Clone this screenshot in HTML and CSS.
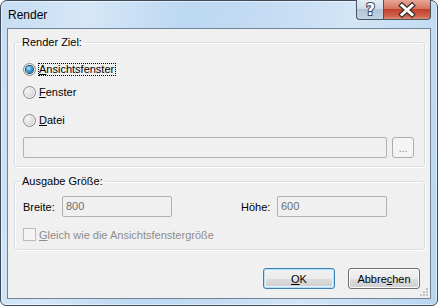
FILE: index.html
```html
<!DOCTYPE html>
<html lang="de">
<head>
    <meta charset="UTF-8">
    <meta name="viewport" content="width=device-width, initial-scale=1.0">
    <title>Render</title>
    <link rel="stylesheet" href="styles.css">
</head>
<body>
    <div class="window">
        <div class="titlebar">
            <span class="title">Render</span>
            <div class="caption-buttons">
                <div class="cap-btn cap-help">
                    <svg width="25" height="18" viewBox="0 0 25 18">
                        <text x="12.5" y="14" text-anchor="middle" class="cap-glyph">?</text>
                    </svg>
                </div>
                <div class="cap-btn cap-close">
                    <svg width="46" height="18" viewBox="0 0 46 18">
                        <path d="M18 4.5 L28 13.5 M28 4.5 L18 13.5" stroke="#3a3230" stroke-width="5.4" stroke-linecap="square"/>
                        <path d="M18 4.5 L28 13.5 M28 4.5 L18 13.5" stroke="#fff" stroke-width="3" stroke-linecap="square"/>
                    </svg>
                </div>
            </div>
        </div>

        <div class="client">
            <fieldset class="group group-target">
                <legend>Render Ziel:</legend>
                <label class="radio row-first">
                    <span class="radio-box checked"></span>
                    <span class="radio-text focus"><u>A</u>nsichtsfenster</span>
                </label>
                <label class="radio row-second">
                    <span class="radio-box"></span>
                    <span class="radio-text"><u>F</u>enster</span>
                </label>
                <label class="radio row-third">
                    <span class="radio-box"></span>
                    <span class="radio-text"><u>D</u>atei</span>
                </label>
                <div class="file-row">
                    <div class="field field-file"></div>
                    <div class="btn-browse">...</div>
                </div>
            </fieldset>

            <fieldset class="group group-size">
                <legend>Ausgabe Größe:</legend>
                <div class="size-row">
                    <span class="size-label">Breite:</span>
                    <div class="field">800</div>
                    <span></span>
                    <span class="size-label">Höhe:</span>
                    <div class="field">600</div>
                </div>
                <label class="check-row">
                    <span class="check-box"></span>
                    <span class="check-text"><u>G</u>leich wie die Ansichtsfenstergröße</span>
                </label>
            </fieldset>

            <div class="footer">
                <div class="btn btn-default"><span><u>O</u>K</span></div>
                <div class="btn"><span>Abbre<u>c</u>hen</span></div>
            </div>

            <svg class="grip" width="10" height="10" viewBox="0 0 10 10">
                <rect x="7" y="1" width="2" height="2" fill="#c4c4c4"/>
                <rect x="4" y="4" width="2" height="2" fill="#c4c4c4"/>
                <rect x="7" y="4" width="2" height="2" fill="#c4c4c4"/>
                <rect x="1" y="7" width="2" height="2" fill="#c4c4c4"/>
                <rect x="4" y="7" width="2" height="2" fill="#c4c4c4"/>
                <rect x="7" y="7" width="2" height="2" fill="#c4c4c4"/>
            </svg>
        </div>
    </div>
</body>
</html>
```

FILE: styles.css
```css
* {
    box-sizing: border-box;
}
body {
    margin: 0;
    background-color: #fff;
    font-family: "Liberation Sans", Arial, sans-serif;
    font-size: 11px;
    color: #000;
}
u {
    text-decoration: underline;
    text-underline-offset: 1px;
}
.window {
    width: 438px;
    height: 306px;
    border: 1px solid #3e4a58;
    border-radius: 7px 7px 6px 6px;
    padding: 0 6px 6px;
    display: flex;
    flex-direction: column;
    background: linear-gradient(100deg, #c6ddf3 0%, #d6e7f7 18%, #bcd8f2 38%, #c4dcf3 55%, #d3e5f6 72%, #b8d5f0 100%);
    box-shadow: inset 0 0 0 1px rgba(255, 255, 255, 0.55);
}
.titlebar {
    height: 27px;
    display: flex;
    justify-content: space-between;
    align-items: flex-start;
}
.title {
    line-height: 28px;
    padding-left: 1px;
    font-size: 12px;
}
.caption-buttons {
    display: flex;
    margin-top: -1px;
}
.cap-btn {
    height: 20px;
    border: 1px solid #4a5563;
    border-top: none;
    display: flex;
    align-items: center;
    justify-content: center;
}
.cap-help {
    width: 27px;
    border-right: none;
    border-radius: 0 0 0 4px;
    background: linear-gradient(#e3ecf5 0%, #cfdbe8 45%, #b3c4d6 50%, #c2d3e4 100%);
}
.cap-close {
    width: 48px;
    border-radius: 0 0 4px 0;
    background: linear-gradient(#e8a596 0%, #d7765f 45%, #c3402b 50%, #d0624d 85%, #e08f74 100%);
}
.cap-glyph {
    font-family: "DejaVu Sans", sans-serif;
    font-size: 15px;
    font-weight: bold;
    fill: #fff;
    stroke: #3e4856;
    stroke-width: 2px;
    paint-order: stroke;
}
.client {
    flex: 1;
    position: relative;
    background-color: #f0f0f0;
    border: 1px solid #6f8298;
    padding: 7px 5px 0 6px;
    display: flex;
    flex-direction: column;
}
.group {
    margin: 0;
    min-width: 0;
    border: 1px solid #d5dfe5;
    border-radius: 3px;
    box-shadow: inset 1px 1px 0 #fff, 1px 1px 0 #fff;
    padding: 0 0 0 8px;
}
.group legend {
    padding: 0 2px;
    margin-left: -3px;
    line-height: 13px;
}
.group-target {
    padding-top: 12px;
    padding-bottom: 8px;
}
.radio {
    display: flex;
    align-items: center;
    height: 16px;
}
.row-second {
    margin-top: 7px;
}
.row-third {
    margin-top: 12px;
}
.radio-box {
    width: 13px;
    height: 13px;
    border-radius: 50%;
    border: 1px solid #8a8c8e;
    background: radial-gradient(circle at 35% 35%, #f6f6f6 0%, #dcdcdc 55%, #bdbdbd 100%);
    box-shadow: inset 0 0 0 1px #f2f2f2;
    display: flex;
    align-items: center;
    justify-content: center;
}
.radio-box.checked::after {
    content: '';
    width: 7px;
    height: 7px;
    border-radius: 50%;
    background: radial-gradient(circle at 40% 35%, #b7ecff 0%, #3b9bd6 45%, #145a93 100%);
    box-shadow: 0 0 0 1px #1f4a6e;
}
.radio-text {
    margin-left: 2px;
    border: 1px dotted transparent;
    padding: 0 1px 0 0;
    line-height: 11px;
}
.radio-text.focus {
    border-color: #000;
}
.file-row {
    display: flex;
    gap: 5px;
    margin-top: 9px;
}
.field {
    height: 21px;
    border: 1px solid #afb1b5;
    border-radius: 2px;
    background-color: #f0f0f0;
    color: #6d6d6d;
    padding: 0 3px;
    line-height: 19px;
}
.field-file {
    width: 364px;
}
.btn-browse {
    width: 22px;
    height: 21px;
    border: 1px solid #adadad;
    border-radius: 3px;
    background-color: #f4f4f4;
    color: #7f7f9a;
    text-align: center;
    line-height: 21px;
    font-size: 10px;
}
.group-size {
    margin-top: 8px;
    padding-top: 8px;
    padding-bottom: 7px;
}
.size-row {
    display: grid;
    grid-template-columns: 39px 110px 69px 36px 110px;
    align-items: center;
}
.check-row {
    display: flex;
    align-items: center;
    margin-top: 10px;
    height: 15px;
}
.check-box {
    width: 13px;
    height: 13px;
    border: 1px solid #bcbcbc;
    background-color: #f4f4f4;
}
.check-text {
    margin-left: 3px;
    color: #8d8d8d;
}
.footer {
    display: flex;
    justify-content: flex-end;
    gap: 13px;
    margin-top: 18px;
    padding-right: 5px;
}
.btn {
    width: 72px;
    height: 21px;
    border: 1px solid #707070;
    border-radius: 3px;
    background: linear-gradient(#f2f2f2 0%, #ebebeb 50%, #dddddd 50%, #cfcfcf 100%);
    box-shadow: inset 0 0 0 1px #fcfcfc;
    display: flex;
    align-items: center;
    justify-content: center;
}
.btn-default {
    border-color: #3c7fb1;
    box-shadow: inset 0 0 0 1px #b6e0f7, inset 0 0 0 2px #e5f4fc;
}
.grip {
    position: absolute;
    right: 1px;
    bottom: 1px;
}
```
